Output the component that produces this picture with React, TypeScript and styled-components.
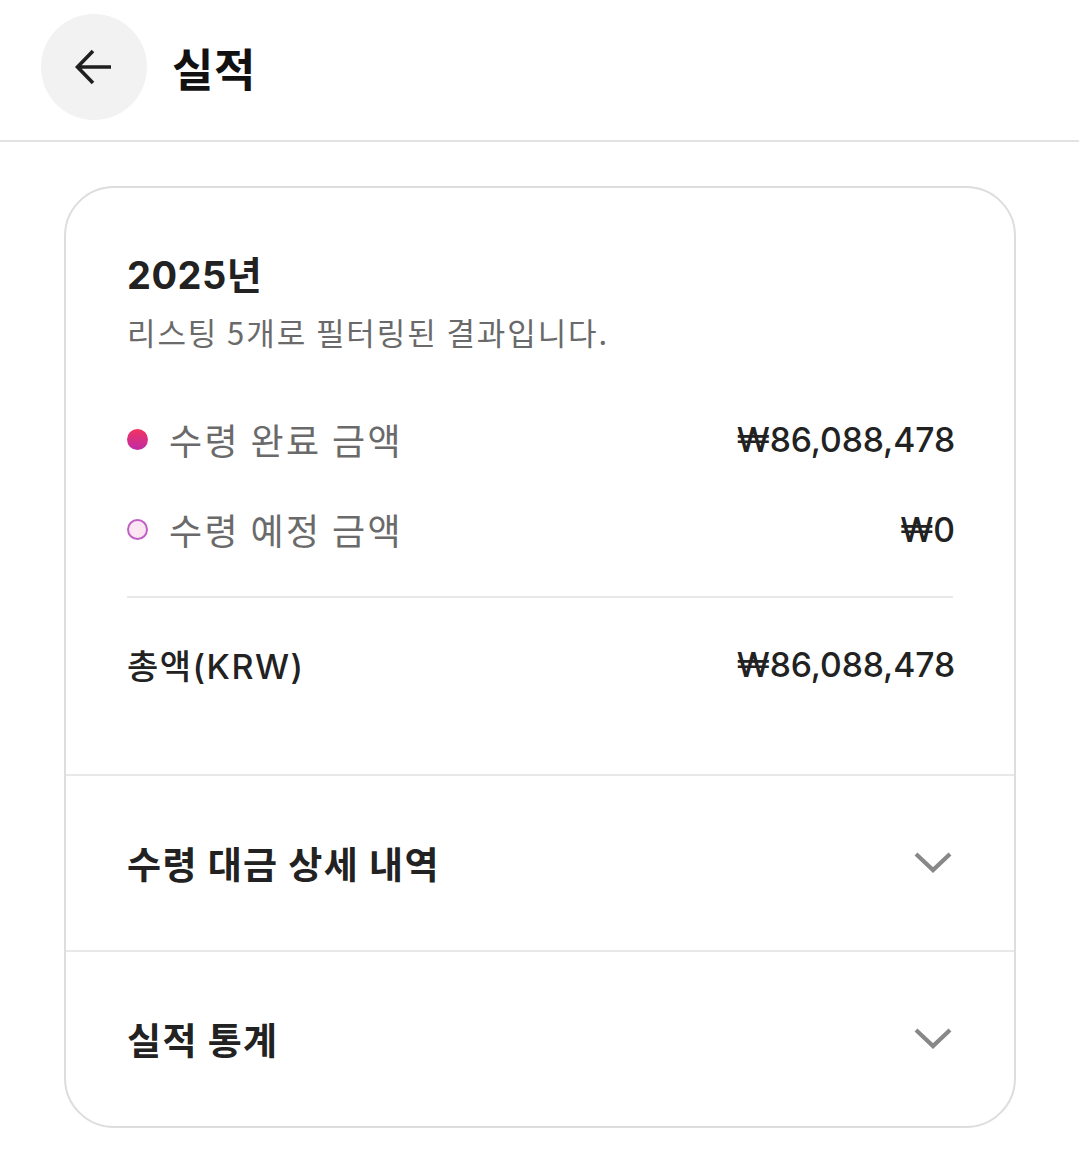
import React from "react";
import styled, { createGlobalStyle } from "styled-components";

const Global = createGlobalStyle`
  html, body { margin: 0; padding: 0; background: #ffffff; }
  body { font-family: "Noto Sans CJK KR", "Noto Sans", sans-serif; color: #222222; }
  * { box-sizing: border-box; }
`;

const LATIN = `"Inter", "Noto Sans CJK KR", sans-serif`;

const Page = styled.div`
  width: 1079px;
  min-height: 1149px;
  background: #fff;
`;

const Header = styled.header`
  height: 142px;
  display: flex;
  align-items: center;
  gap: 24px;
  padding: 0 0 6px 41px;
  border-bottom: 2px solid #e2e2e2;
`;

const BackButton = styled.button`
  width: 106px;
  height: 106px;
  border-radius: 50%;
  border: none;
  background: #f2f2f2;
  display: flex;
  align-items: center;
  justify-content: center;
  padding: 0;
`;

const Title = styled.h1`
  margin: 0 0 0 1px;
  font-size: 45px;
  font-weight: 700;
  color: #111;
  letter-spacing: 0.5px;
`;

const Card = styled.section`
  margin: 44px 63px 0 64px;
  border: 2.5px solid #dddddd;
  border-radius: 50px;
  overflow: hidden;
`;

const Summary = styled.div`
  padding: 64px 59px 65px 61px;
  display: flex;
  flex-direction: column;
`;

const Year = styled.h2`
  margin: 0;
  font-family: ${LATIN};
  font-size: 38px;
  line-height: 46px;
  font-weight: 700;
  color: #222;
  letter-spacing: 0.5px;
`;

const Subtitle = styled.p`
  margin: 14px 0 0;
  font-size: 31px;
  line-height: 40px;
  color: #6a6a6a;
  font-weight: 400;
  letter-spacing: 1.9px;
`;

const Rows = styled.div`
  margin-top: 42px;
  display: flex;
  flex-direction: column;
`;

const Row = styled.div`
  height: 90px;
  display: flex;
  align-items: center;
  justify-content: space-between;
`;

const LabelGroup = styled.div`
  display: flex;
  align-items: center;
  gap: 21px;
`;

const Dot = styled.span<{ $filled?: boolean }>`
  width: 21px;
  height: 21px;
  border-radius: 50%;
  background: ${(p) =>
    p.$filled ? "linear-gradient(180deg, #f2335f 0%, #bf2aa8 100%)" : "#fde6f3"};
  border: ${(p) => (p.$filled ? "none" : "2.5px solid #c160c4")};
`;

const Label = styled.span<{ $strong?: boolean }>`
  font-family: ${(p) => (p.$strong ? LATIN : `"Noto Sans CJK KR", sans-serif`)};
  font-size: ${(p) => (p.$strong ? "34px" : "36px")};
  color: ${(p) => (p.$strong ? "#222" : "#6a6a6a")};
  font-weight: ${(p) => (p.$strong ? 500 : 400)};
  letter-spacing: ${(p) => (p.$strong ? "1.5px" : "2.4px")};
`;

const Amount = styled.span`
  font-family: ${LATIN};
  font-size: 33.7px;
  font-weight: 500;
  color: #222;
  letter-spacing: -0.1px;
`;

const Divider = styled.hr`
  margin: 22px 2px 21px 0;
  border: none;
  height: 2px;
  background: #e8e8e8;
`;

const Accordion = styled.div`
  height: 176px;
  border-top: 2px solid #e8e8e8;
  display: flex;
  align-items: center;
  justify-content: space-between;
  padding: 0 62px 0 61px;
`;

const AccordionTitle = styled.span`
  font-size: 37px;
  font-weight: 700;
  color: #222;
  letter-spacing: 1.4px;
`;

const ArrowLeft = () => (
  <svg width="40" height="40" viewBox="0 0 40 40" fill="none">
    <path
      d="M37 20H4M19 4L3.5 20L19 36"
      stroke="#1f1f1f"
      strokeWidth="3.6"
      strokeLinecap="butt"
      strokeLinejoin="miter"
    />
  </svg>
);

const Chevron = () => (
  <svg width="38" height="24" viewBox="0 0 38 24" fill="none">
    <path d="M2 3L19 19L36 3" stroke="#888888" strokeWidth="4.2" />
  </svg>
);

export default function App() {
  return (
    <Page>
      <Global />
      <Header>
        <BackButton aria-label="뒤로">
          <ArrowLeft />
        </BackButton>
        <Title>실적</Title>
      </Header>
      <Card>
        <Summary>
          <Year>2025년</Year>
          <Subtitle>리스팅 5개로 필터링된 결과입니다.</Subtitle>
          <Rows>
            <Row>
              <LabelGroup>
                <Dot $filled />
                <Label>수령 완료 금액</Label>
              </LabelGroup>
              <Amount>₩86,088,478</Amount>
            </Row>
            <Row>
              <LabelGroup>
                <Dot />
                <Label>수령 예정 금액</Label>
              </LabelGroup>
              <Amount>₩0</Amount>
            </Row>
            <Divider />
            <Row>
              <Label $strong>총액(KRW)</Label>
              <Amount>₩86,088,478</Amount>
            </Row>
          </Rows>
        </Summary>
        <Accordion>
          <AccordionTitle>수령 대금 상세 내역</AccordionTitle>
          <Chevron />
        </Accordion>
        <Accordion>
          <AccordionTitle>실적 통계</AccordionTitle>
          <Chevron />
        </Accordion>
      </Card>
    </Page>
  );
}
